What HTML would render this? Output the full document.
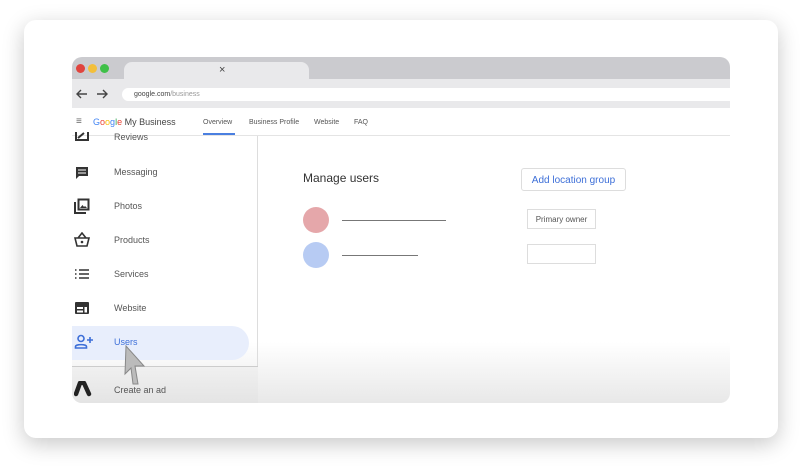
<!DOCTYPE html>
<html><head><style>
*{margin:0;padding:0;box-sizing:border-box}
body{width:802px;height:467px;background:#fff;font-family:"Liberation Sans",Arial,sans-serif;position:relative;overflow:hidden}
.card{position:absolute;left:24px;top:20px;width:754px;height:418px;background:#fff;border-radius:12px;box-shadow:0 6px 22px rgba(0,0,0,.22)}
.win{position:absolute;left:72px;top:57px;width:658px;height:346px;border-radius:10px;overflow:hidden;background:#fff}
.tabs{position:absolute;left:0;top:0;width:100%;height:22px;background:#cbcbcf}
.tab{position:absolute;left:52px;top:5px;width:185px;height:20px;background:#e9e9eb;border-radius:8px 8px 0 0}
.dot{position:absolute;top:7px;width:9px;height:9px;border-radius:50%}
.addr{position:absolute;left:0;top:22px;width:100%;height:29px;background:#e9e9eb}
.url{position:absolute;left:50px;top:9px;width:620px;height:13px;background:#fff;border-radius:7px;font-size:7px;color:#444;padding:3px 0 0 12px}
.hdr{position:absolute;left:0;top:51px;width:100%;height:28px;background:#fff;border-bottom:1px solid #e4e4e4;font-size:7px;color:#555}
.side{position:absolute;left:0;top:79px;width:186px;height:267px;border-right:1px solid #ddd}
.item{position:absolute;left:42px;font-size:9px;color:#555}
.ic{position:absolute;left:2px}
.grad{position:absolute;left:0;top:285px;width:100%;height:61px;background:linear-gradient(#fff,#e8e8e8)}
</style></head><body>
<div class="card"></div>
<div class="win">
 <div class="tabs"><div class="dot" style="left:4px;background:#e0443e"></div><div class="dot" style="left:16px;background:#f3bf3a"></div><div class="dot" style="left:28px;background:#3fc048"></div>
  <div class="tab"><span style="position:absolute;left:95px;top:2px;font-size:11px;color:#444">×</span></div></div>
 <div class="addr">
  <svg style="position:absolute;left:3px;top:8px" width="34" height="14"><path d="M12 7H2M6 3L2 7L6 11M22 7H32M28 3L32 7L28 11" stroke="#444" stroke-width="1.4" fill="none"/></svg>
  <div class="url">google.com<span style="color:#999">/business</span></div></div>
 <div class="grad"></div>
 <div class="hdr">
  <span style="position:absolute;left:4px;top:8px;font-size:10px;color:#666">≡</span>
  <span style="position:absolute;left:21px;top:9px;font-size:9px;color:#444"><b style="font-weight:normal;color:#4285f4">G</b><b style="font-weight:normal;color:#ea4335">o</b><b style="font-weight:normal;color:#fbbc05">o</b><b style="font-weight:normal;color:#4285f4">g</b><b style="font-weight:normal;color:#34a853">l</b><b style="font-weight:normal;color:#ea4335">e</b> My Business</span>
  <span style="position:absolute;left:131px;top:11px">Overview</span>
  <div style="position:absolute;left:131px;top:25px;width:32px;height:2px;background:#4a7fe0"></div>
  <span style="position:absolute;left:177px;top:11px">Business Profile</span>
  <span style="position:absolute;left:242px;top:11px">Website</span>
  <span style="position:absolute;left:282px;top:11px">FAQ</span>
 </div>
 <div class="side">
  <div style="position:absolute;left:0;top:190px;width:177px;height:34px;background:#e8eefc;border-radius:0 17px 17px 0"></div>
  <div style="position:absolute;left:0;top:230px;width:186px;height:37px;background:linear-gradient(#f0f0f0,#e4e4e4);border-top:1px solid #ccc"></div>
  <div class="item" style="top:-4px">Reviews</div>
  <svg class="ic" style="top:-4px" width="16" height="10"><path d="M2 0V8H14V0M4 6L10 1" stroke="#333" stroke-width="2" fill="none"/></svg>
  <div class="item" style="top:31px">Messaging</div>
  <svg class="ic" style="top:29px" width="16" height="16"><path d="M2 2H14V11H5L2 14Z" fill="#333"/><path d="M4 5H12M4 8H12" stroke="#fff" stroke-width="1"/></svg>
  <div class="item" style="top:65px">Photos</div>
  <svg class="ic" style="top:62px" width="16" height="16"><path d="M1 4V15H12" stroke="#333" stroke-width="2" fill="none"/><rect x="4.5" y="1.5" width="10" height="10" stroke="#333" stroke-width="2" fill="none"/><path d="M6 10L8.5 7L10 9L11 8L13 10Z" fill="#333"/></svg>
  <div class="item" style="top:99px">Products</div>
  <svg class="ic" style="top:96px" width="16" height="16"><path d="M1 6H15L13 14H3Z M4 6L8 1L12 6" stroke="#333" stroke-width="1.6" fill="none"/><circle cx="8" cy="10" r="1.3" fill="#333"/></svg>
  <div class="item" style="top:133px">Services</div>
  <svg class="ic" style="top:131px" width="16" height="14"><path d="M1 3H2.5M1 7H2.5M1 11H2.5M5 3H15M5 7H15M5 11H15" stroke="#333" stroke-width="1.6"/></svg>
  <div class="item" style="top:167px">Website</div>
  <svg class="ic" style="top:165px" width="16" height="14"><rect x="1" y="1" width="14" height="12" rx="1" fill="#333"/><rect x="3" y="6" width="6" height="2" fill="#fff"/><rect x="3" y="9.5" width="6" height="2" fill="#fff"/><rect x="10.5" y="6" width="2.5" height="5.5" fill="#fff"/></svg>
  <div class="item" style="top:201px;color:#3d6fd8">Users</div>
  <svg class="ic" style="top:198px" width="20" height="16"><circle cx="7" cy="4.5" r="3" stroke="#3d6fd8" stroke-width="1.6" fill="none"/><path d="M1.5 14V12.5C1.5 10 12.5 10 12.5 12.5V14Z" stroke="#3d6fd8" stroke-width="1.6" fill="none"/><path d="M16 3V9M13 6H19" stroke="#3d6fd8" stroke-width="1.6"/></svg>
  <div class="item" style="top:249px">Create an ad</div>
  <svg class="ic" style="top:245px" width="18" height="16"><path d="M6 2L2 13M10 2L15 13" stroke="#222" stroke-width="4.5" stroke-linecap="round"/><path d="M6 2H10" stroke="#222" stroke-width="4"/></svg>
 </div>
 <div style="position:absolute;left:231px;top:114px;font-size:12px;color:#333">Manage users</div>
 <div style="position:absolute;left:449px;top:111px;width:105px;height:23px;border:1px solid #ddd;border-radius:3px;font-size:10px;color:#3d6fd8;padding-top:6px;text-align:center">Add location group</div>
 <div style="position:absolute;left:231px;top:150px;width:26px;height:26px;border-radius:50%;background:#e5a7aa"></div>
 <div style="position:absolute;left:270px;top:163px;width:104px;height:1px;background:#777"></div>
 <div style="position:absolute;left:455px;top:152px;width:69px;height:20px;border:1px solid #ddd;font-size:8px;color:#555;padding-top:5px;text-align:center">Primary owner</div>
 <div style="position:absolute;left:231px;top:185px;width:26px;height:26px;border-radius:50%;background:#b7cbf3"></div>
 <div style="position:absolute;left:270px;top:198px;width:76px;height:1px;background:#777"></div>
 <div style="position:absolute;left:455px;top:187px;width:69px;height:20px;border:1px solid #ddd"></div>
 <svg style="position:absolute;left:50px;top:287px" width="26" height="42"><path d="M4 2 L22 22 L13 22 L16 40 L11 40 L9 24 L3 30 Z" fill="#bbb" stroke="#888" stroke-width="1"/></svg>
</div>
</body></html>
